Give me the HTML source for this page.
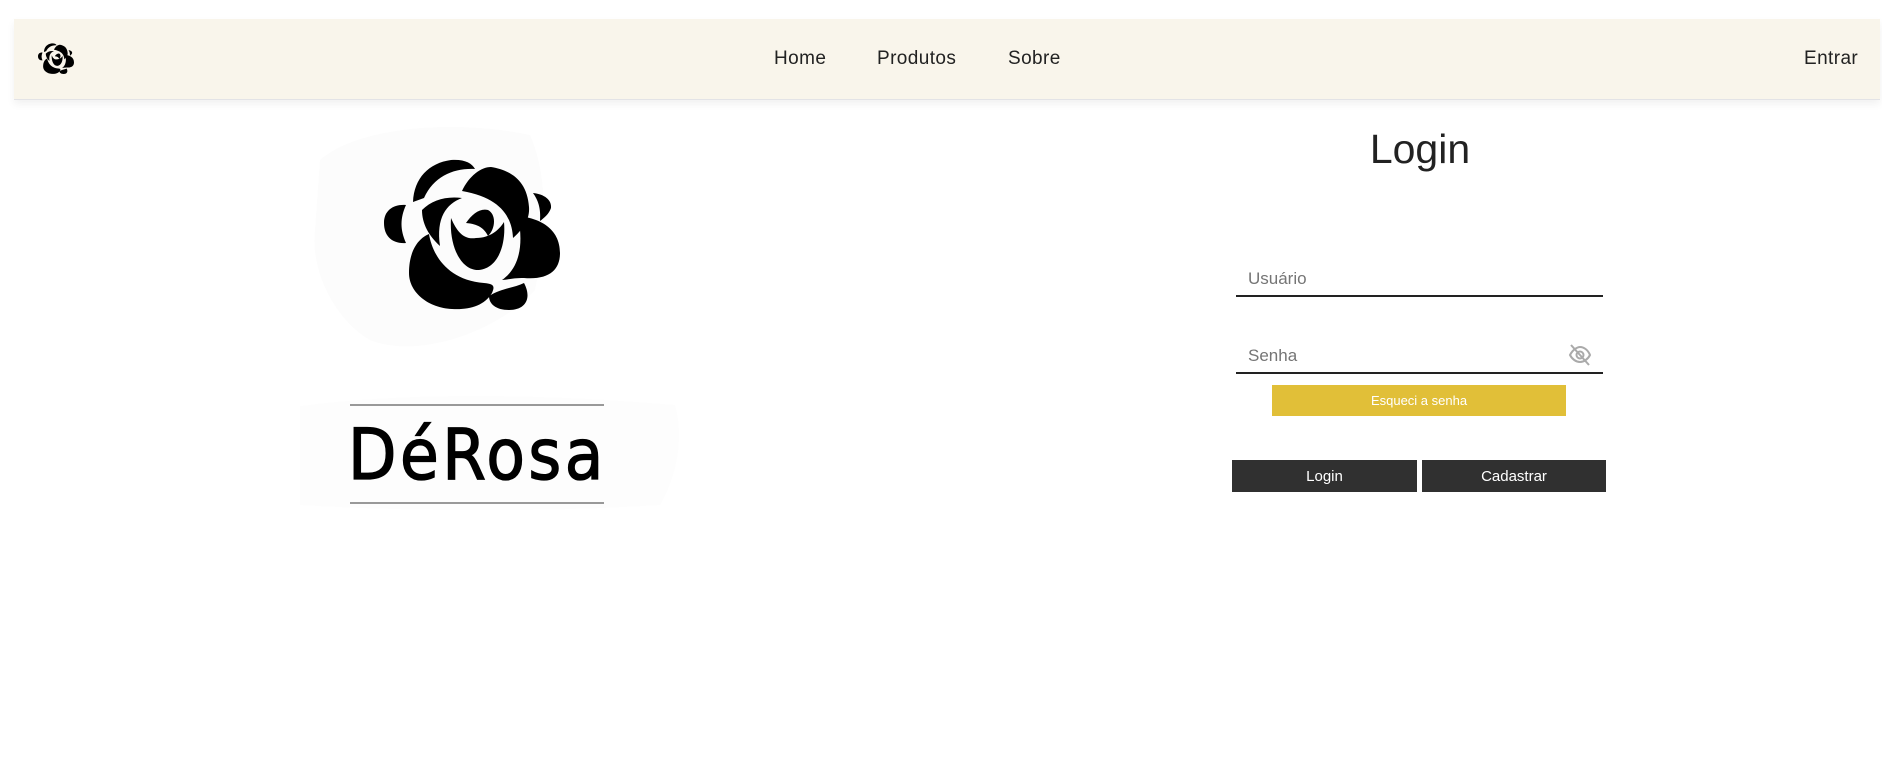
<!DOCTYPE html>
<html><head><meta charset="utf-8"><style>
*{margin:0;padding:0;box-sizing:border-box}
body{width:1882px;height:759px;background:#fff;position:relative;overflow:hidden;font-family:"Liberation Sans",sans-serif}
.nav{position:absolute;left:14px;top:19px;width:1866px;height:81px;background:#f9f5eb;border-bottom:1px solid #e3e3e6;box-shadow:0 4px 8px rgba(0,0,0,0.06)}
.nl{position:absolute;top:48px;font-size:19px;color:#222;letter-spacing:0.4px}
.abs{position:absolute}
.ph{position:absolute;font-size:17px;color:#757575}
.line{position:absolute;background:#222;height:2px}
.btn{position:absolute;background:#303030;color:#fff;font-size:15px;display:flex;align-items:center;justify-content:center}
</style></head><body>
<div class="nav"></div>
<svg class="abs" style="left:38px;top:41px" width="36" height="35" viewBox="0 0 176 152">
<g fill="#000">
<path d="M29 44 C30 20 45 5 67 2 C80 1 88 5 91 11 C70 10 50 18 40 40 Z"/>
<path d="M78 33 C85 18 97 9 107 9 C125 12 143 21 145 49 C146 62 138 72 129 80 C128 60 118 40 78 33 Z"/>
<path d="M0 65 C0 52 10 46 22 47 C16 60 16 72 22 85 C8 86 0 78 0 65 Z"/>
<path d="M25 115 C25 92 35 80 45 76 C48 95 62 122 100 125 C110 126 111 128 108 135 C100 148 85 152 68 151 C45 150 25 135 25 115 Z"/>
<path d="M134 58 C155 60 176 70 176 95 C176 112 165 122 140 120 C128 120 122 122 118 122 C135 110 140 88 134 58 Z"/>
<path d="M105 138 C118 130 130 130 140 125 C148 140 142 152 125 152 C112 152 105 146 105 138 Z"/>
<path d="M149 35 C160 36 168 42 167 50 C165 56 160 60 156 63 C157 50 154 42 149 35 Z"/>
<path d="M38 52 C48 42 62 38 78 40 C62 46 52 60 56 88 C45 78 38 66 38 52 Z"/>
<path d="M67 60 C73 74 80 82 92 80 C106 80 115 72 120 64 C122 85 115 110 95 112 C78 113 65 90 67 60 Z"/>
<path d="M82 65 C88 56 96 50 104 52 C112 56 112 70 104 78 C100 70 94 66 82 65 Z"/>
</g></svg>
<div class="nl" style="left:774px;top:48px">Home</div>
<div class="nl" style="left:877px;top:48px">Produtos</div>
<div class="nl" style="left:1008px;top:48px">Sobre</div>
<div class="nl" style="left:1804px;top:48px">Entrar</div>

<svg class="abs" style="left:300px;top:120px" width="400" height="390">
<path d="M20 40 C60 5 160 0 230 15 C250 60 245 120 235 170 C200 210 120 240 70 220 C35 200 10 150 15 110 Z" fill="#fcfcfc"/>
<path d="M-25 290 C60 275 200 270 375 285 C385 320 375 360 360 385 C250 392 120 392 0 385 C-20 350 -30 320 -25 290 Z" fill="#fdfdfd"/>
</svg>
<svg class="abs" style="left:384px;top:158px" width="176" height="152" viewBox="0 0 176 152">
<g fill="#000">
<path d="M29 44 C30 20 45 5 67 2 C80 1 88 5 91 11 C70 10 50 18 40 40 Z"/>
<path d="M78 33 C85 18 97 9 107 9 C125 12 143 21 145 49 C146 62 138 72 129 80 C128 60 118 40 78 33 Z"/>
<path d="M0 65 C0 52 10 46 22 47 C16 60 16 72 22 85 C8 86 0 78 0 65 Z"/>
<path d="M25 115 C25 92 35 80 45 76 C48 95 62 122 100 125 C110 126 111 128 108 135 C100 148 85 152 68 151 C45 150 25 135 25 115 Z"/>
<path d="M134 58 C155 60 176 70 176 95 C176 112 165 122 140 120 C128 120 122 122 118 122 C135 110 140 88 134 58 Z"/>
<path d="M105 138 C118 130 130 130 140 125 C148 140 142 152 125 152 C112 152 105 146 105 138 Z"/>
<path d="M149 35 C160 36 168 42 167 50 C165 56 160 60 156 63 C157 50 154 42 149 35 Z"/>
<path d="M38 52 C48 42 62 38 78 40 C62 46 52 60 56 88 C45 78 38 66 38 52 Z"/>
<path d="M67 60 C73 74 80 82 92 80 C106 80 115 72 120 64 C122 85 115 110 95 112 C78 113 65 90 67 60 Z"/>
<path d="M82 65 C88 56 96 50 104 52 C112 56 112 70 104 78 C100 70 94 66 82 65 Z"/>
</g></svg>
<div class="abs" style="left:350px;top:404px;width:254px;height:2px;background:#999"></div>
<div class="abs" style="left:350px;top:502px;width:254px;height:2px;background:#999"></div>
<div class="abs" style="left:348px;top:415px;width:280px;font-family:'DejaVu Sans Condensed','DejaVu Sans',sans-serif;font-stretch:condensed;font-size:70px;line-height:80px;color:#000;letter-spacing:3.5px;-webkit-text-stroke:1.3px #000;white-space:nowrap">DéRosa</div>

<div class="abs" style="left:1320px;top:126px;width:200px;text-align:center;font-size:41px;color:#222">Login</div>
<div class="ph" style="left:1248px;top:269px">Usuário</div>
<div class="line" style="left:1236px;top:295px;width:367px"></div>
<div class="ph" style="left:1248px;top:346px">Senha</div>
<svg class="abs" style="left:1568px;top:343px" width="24" height="24" viewBox="0 0 24 24" fill="none" stroke="#aaa" stroke-width="2">
<path d="M2 12 C5 6 10 4 12 4 C16 4 20 7 22 12 C20 16 16 19 12 19 C8 19 4 16 2 12 Z"/>
<circle cx="12" cy="12" r="3.5"/>
<path d="M3 2 L21 22"/>
</svg>
<div class="line" style="left:1236px;top:372px;width:367px"></div>
<div class="abs" style="left:1272px;top:385px;width:294px;height:31px;background:#e1bf38;color:#fff;font-size:13px;display:flex;align-items:center;justify-content:center">Esqueci a senha</div>
<div class="btn" style="left:1232px;top:460px;width:185px;height:32px">Login</div>
<div class="btn" style="left:1422px;top:460px;width:184px;height:32px">Cadastrar</div>
</body></html>
